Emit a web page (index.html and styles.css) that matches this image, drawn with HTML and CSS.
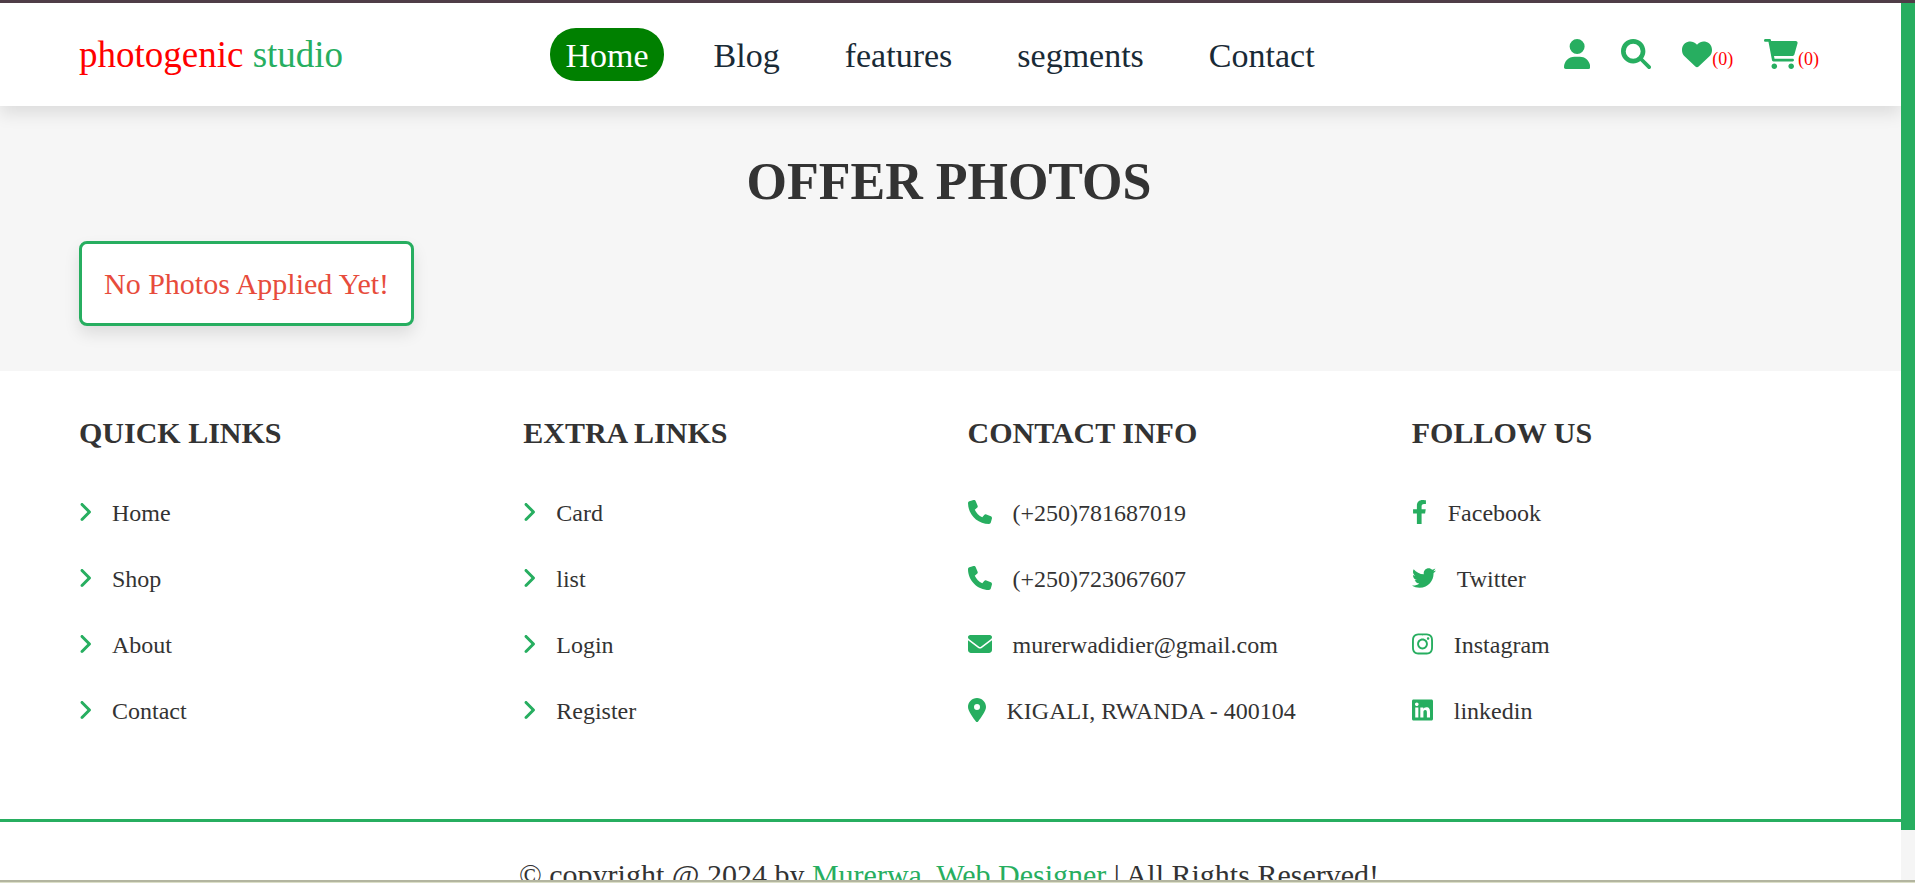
FILE: index.html
```html
<!DOCTYPE html>
<html lang="en">
<head>
<meta charset="utf-8">
<title>photogenic studio</title>
<link rel="stylesheet" href="styles.css">
</head>
<body>
<svg class="sprite" aria-hidden="true">
  <symbol id="angle" viewBox="0 0 256 512"><path d="M64 448c-8.188 0-16.38-3.125-22.62-9.375c-12.5-12.5-12.5-32.75 0-45.25L178.8 256L41.38 118.6c-12.5-12.5-12.5-32.75 0-45.25s32.75-12.5 45.25 0l160 160c12.5 12.5 12.5 32.75 0 45.25l-160 160C80.38 444.9 72.19 448 64 448z"/></symbol>
  <symbol id="phone" viewBox="0 0 512 512"><path d="M164.9 24.6c-7.7-18.6-28-28.5-47.4-23.2l-88 24C12.1 30.2 0 46 0 64C0 311.4 200.6 512 448 512c18 0 33.800-12.100 38.600-29.500l24-88c5.300-19.400-4.600-39.700-23.200-47.400l-96-40c-16.300-6.800-35.200-2.100-46.300 11.600L304.700 368C234.300 334.700 177.300 277.700 144 207.300L193.300 167c13.700-11.200 18.400-30 11.600-46.300l-40-96z"/></symbol>
</svg>
<div class="edge edge-top"></div>
<div class="viewport">
  <div class="page">
    <header class="header">
      <a class="logo" href="#">photogenic <span>studio</span></a>
      <nav class="navbar">
        <a class="active" href="#">Home</a>
        <a href="#">Blog</a>
        <a href="#">features</a>
        <a href="#">segments</a>
        <a href="#">Contact</a>
      </nav>
      <div class="icons">
        <a href="#" aria-label="Account"><svg viewBox="0 0 448 512"><path d="M224 256A128 128 0 1 0 224 0a128 128 0 1 0 0 256zm-45.700 48C79.800 304 0 383.800 0 482.300C0 498.700 13.300 512 29.700 512H418.300c16.400 0 29.700-13.300 29.700-29.700C448 383.800 368.200 304 269.700 304H178.300z"/></svg></a>
        <a href="#" aria-label="Search"><svg viewBox="0 0 512 512"><path d="M416 208c0 45.900-14.900 88.300-40 122.700L502.600 457.400c12.500 12.500 12.500 32.800 0 45.300s-32.800 12.500-45.300 0L330.700 376c-34.400 25.200-76.800 40-122.700 40C93.100 416 0 322.900 0 208S93.100 0 208 0S416 93.100 416 208zM208 336a128 128 0 1 0 0-256 128 128 0 1 0 0 256z"/></svg></a>
        <a href="#" aria-label="Wishlist"><svg viewBox="0 0 512 512"><path d="M47.600 300.400L228.300 469.100c7.500 7 17.400 10.900 27.700 10.900s20.200-3.900 27.700-10.900L464.400 300.400c30.400-28.300 47.600-68 47.600-109.500v-5.800c0-69.900-50.500-129.500-119.400-141C347 36.500 300.600 51.400 268 84L256 96 244 84c-32.600-32.600-79-47.500-124.600-39.900C50.500 55.600 0 115.200 0 185.100v5.800c0 41.500 17.200 81.200 47.600 109.500z"/></svg><span>(0)</span></a>
        <a href="#" aria-label="Cart"><svg viewBox="0 0 576 512"><path d="M96 0C107.500 0 117.400 8.190 119.600 19.510L121.100 32H541.800C562.100 32 578.300 52.250 572.600 72.660L518.600 264.700C514.700 278.500 502.100 288 487.800 288H170.700L179.900 336H488C501.300 336 512 346.700 512 360C512 373.300 501.300 384 488 384H159.100C148.500 384 138.600 375.800 136.400 364.500L76.140 48H24C10.750 48 0 37.250 0 24C0 10.750 10.750 0 24 0H96zM128 464C128 437.500 149.500 416 176 416C202.500 416 224 437.500 224 464C224 490.500 202.500 512 176 512C149.500 512 128 490.500 128 464zM512 464C512 490.500 490.500 512 464 512C437.500 512 416 490.500 416 464C416 437.500 437.500 416 464 416C490.500 416 512 437.500 512 464z"/></svg><span>(0)</span></a>
      </div>
    </header>
    <main class="offers">
      <h1>OFFER PHOTOS</h1>
      <p class="empty">No Photos Applied Yet!</p>
    </main>
    <footer class="footer">
      <div class="columns">
        <section>
          <h2>QUICK LINKS</h2>
          <a href="#"><svg viewBox="0 0 256 512"><use href="#angle"/></svg>Home</a>
          <a href="#"><svg viewBox="0 0 256 512"><use href="#angle"/></svg>Shop</a>
          <a href="#"><svg viewBox="0 0 256 512"><use href="#angle"/></svg>About</a>
          <a href="#"><svg viewBox="0 0 256 512"><use href="#angle"/></svg>Contact</a>
        </section>
        <section>
          <h2>EXTRA LINKS</h2>
          <a href="#"><svg viewBox="0 0 256 512"><use href="#angle"/></svg>Card</a>
          <a href="#"><svg viewBox="0 0 256 512"><use href="#angle"/></svg>list</a>
          <a href="#"><svg viewBox="0 0 256 512"><use href="#angle"/></svg>Login</a>
          <a href="#"><svg viewBox="0 0 256 512"><use href="#angle"/></svg>Register</a>
        </section>
        <section>
          <h2>CONTACT INFO</h2>
          <a href="#"><svg viewBox="0 0 512 512"><use href="#phone"/></svg>(+250)781687019</a>
          <a href="#"><svg viewBox="0 0 512 512"><use href="#phone"/></svg>(+250)723067607</a>
          <a href="#"><svg viewBox="0 0 512 512"><path d="M464 64C490.500 64 512 85.490 512 112C512 127.100 504.900 141.300 492.800 150.400L275.200 313.600C263.800 322.100 248.200 322.100 236.800 313.600L19.200 150.400C7.113 141.300 0 127.100 0 112C0 85.490 21.490 64 48 64H464zM217.600 339.200C240.400 356.300 271.600 356.300 294.400 339.200L512 176V384C512 419.300 483.300 448 448 448H64C28.650 448 0 419.300 0 384V176L217.600 339.200z"/></svg>murerwadidier@gmail.com</a>
          <a href="#"><svg viewBox="0 0 384 512"><path d="M215.700 499.200C267 435 384 279.400 384 192C384 86 298 0 192 0S0 86 0 192c0 87.400 117 243 168.300 307.200c12.300 15.300 35.100 15.300 47.400 0zM192 128a64 64 0 1 1 0 128 64 64 0 1 1 0-128z"/></svg>KIGALI, RWANDA - 400104</a>
        </section>
        <section>
          <h2>FOLLOW US</h2>
          <a href="#"><svg viewBox="0 0 320 512"><path d="M279.140 288l14.220-92.660h-88.910v-60.130c0-25.350 12.420-50.060 52.240-50.060h40.420V6.260S260.430 0 225.360 0c-73.220 0-121.080 44.380-121.080 124.720v70.620H22.890V288h81.390v224h100.170V288z"/></svg>Facebook</a>
          <a href="#"><svg viewBox="0 0 512 512"><path d="M459.370 151.716c.325 4.548.325 9.097.325 13.645 0 138.720-105.583 298.558-298.558 298.558-59.452 0-114.680-17.219-161.137-47.106 8.447.974 16.568 1.299 25.340 1.299 49.055 0 94.213-16.568 130.274-44.832-46.132-.975-84.792-31.188-98.112-72.772 6.498.974 12.995 1.624 19.818 1.624 9.421 0 18.843-1.300 27.614-3.573-48.081-9.747-84.143-51.980-84.143-102.985v-1.299c13.969 7.797 30.214 12.670 47.431 13.319-28.264-18.843-46.781-51.005-46.781-87.391 0-19.492 5.197-37.360 14.294-52.954 51.655 63.675 129.300 105.258 216.365 109.807-1.624-7.797-2.599-15.918-2.599-24.040 0-57.828 46.782-104.934 104.934-104.934 30.213 0 57.502 12.670 76.670 33.137 23.715-4.548 46.456-13.320 66.599-25.340-7.798 24.366-24.366 44.833-46.132 57.827 21.117-2.273 41.584-8.122 60.426-16.243-14.292 20.791-32.161 39.308-52.628 54.253z"/></svg>Twitter</a>
          <a href="#"><svg viewBox="0 0 448 512"><path d="M224.100 141c-63.600 0-114.900 51.300-114.900 114.900s51.300 114.900 114.900 114.900S339 319.500 339 255.900 287.700 141 224.100 141zm0 189.600c-41.100 0-74.700-33.500-74.700-74.700s33.500-74.700 74.700-74.700 74.700 33.500 74.700 74.700-33.600 74.700-74.700 74.700zm146.400-194.300c0 14.900-12 26.800-26.800 26.800-14.900 0-26.800-12-26.800-26.800s12-26.800 26.800-26.800 26.800 12 26.800 26.800zm76.100 27.200c-1.700-35.900-9.900-67.700-36.200-93.900-26.200-26.200-58-34.400-93.900-36.200-37-2.100-147.900-2.100-184.900 0-35.800 1.700-67.600 9.900-93.900 36.100s-34.400 58-36.200 93.900c-2.100 37-2.100 147.900 0 184.900 1.700 35.900 9.900 67.700 36.200 93.900s58 34.400 93.900 36.200c37 2.100 147.900 2.100 184.900 0 35.900-1.700 67.700-9.900 93.900-36.200 26.200-26.200 34.400-58 36.200-93.900 2.100-37 2.100-147.800 0-184.800zM398.800 388c-7.800 19.600-22.900 34.700-42.600 42.600-29.500 11.700-99.500 9-132.100 9s-102.700 2.600-132.100-9c-19.600-7.800-34.700-22.900-42.600-42.600-11.700-29.500-9-99.500-9-132.100s-2.600-102.700 9-132.100c7.800-19.600 22.900-34.700 42.600-42.600 29.500-11.700 99.500-9 132.100-9s102.700-2.600 132.100 9c19.600 7.800 34.700 22.900 42.600 42.600 11.700 29.500 9 99.500 9 132.100s2.700 102.700-9 132.100z"/></svg>Instagram</a>
          <a href="#"><svg viewBox="0 0 448 512"><path d="M416 32H31.900C14.300 32 0 46.500 0 64.300v383.400C0 465.500 14.300 480 31.900 480H416c17.600 0 32-14.500 32-32.300V64.300c0-17.800-14.400-32.300-32-32.300zM135.400 416H69V202.200h66.500V416zm-33.200-243c-21.300 0-38.500-17.300-38.500-38.500S80.900 96 102.200 96c21.200 0 38.500 17.300 38.500 38.500 0 21.300-17.200 38.500-38.500 38.500zm282.100 243h-66.400V312c0-24.800-.5-56.700-34.500-56.700-34.600 0-39.900 27-39.900 54.900V416h-66.400V202.200h63.700v29.200h.9c8.900-16.800 30.600-34.500 62.900-34.500 67.200 0 79.700 44.300 79.700 101.900V416z"/></svg>linkedin</a>
        </section>
      </div>
      <p class="credit">© copyright @ 2024 by <span>Murerwa, Web Designer</span> | All Rights Reserved!</p>
    </footer>
  </div>
  <div class="track" aria-hidden="true"><div class="thumb"></div></div>
</div>
<div class="edge edge-bottom"></div>
</body>
</html>
```

FILE: styles.css
```css
* { box-sizing: border-box; margin: 0; padding: 0; }

:root {
  --green: #27ae60;
  --ink: #333;
  --left: 79px;
  --right: 82px;
  --shadow: 0 8px 16px rgba(0, 0, 0, .1);
}

body {
  display: flex;
  flex-direction: column;
  height: 100vh;
  overflow: hidden;
  font-family: "Liberation Serif", "Times New Roman", serif;
  color: var(--ink);
  background: #fff;
}

a { color: inherit; text-decoration: none; }
svg { display: block; fill: var(--green); }
.sprite { position: absolute; width: 0; height: 0; }

.edge { flex: none; height: 3px; }
.edge-top { background: #4f3d47; }
.edge-bottom { background: #dcdfc8; border-top: 2px solid #b3b5a0; }

.viewport { flex: 1; min-height: 0; display: flex; }
.page { flex: 1; min-width: 0; overflow: hidden; }
.track { flex: none; width: 14px; background: #f5f5f5; }
.thumb { height: 94.3%; background: var(--green); }

.header {
  position: relative;
  display: flex;
  align-items: center;
  justify-content: space-between;
  padding: 25px var(--right) 25px var(--left);
  background: #fff;
  box-shadow: var(--shadow);
}
.logo { font-size: 37px; color: #f00; }
.logo span { color: var(--green); }

.navbar { display: flex; gap: 35px; }
.navbar a {
  padding: 8px 15px 6px;
  font-size: 34px;
  line-height: 39px;
  color: #192a36;
  border-radius: 26px;
}
.navbar .active { background: green; color: #fff; }

.icons { display: flex; gap: 31px; padding: 0 0 2px 27px; }
.icons a { display: flex; align-items: flex-end; }
.icons svg { height: 30px; }
.icons span { font-size: 18px; line-height: 20px; color: #f00; }

.offers { padding: 46px var(--right) 45px var(--left); background: #f6f6f6; }
.offers h1 { font-size: 52px; line-height: 60px; text-align: center; }
.empty {
  width: fit-content;
  margin-top: 29px;
  padding: 22px;
  font-size: 30px;
  line-height: 35px;
  color: #e74c3c;
  background: #fff;
  border: 3px solid var(--green);
  border-radius: 8px;
  box-shadow: var(--shadow);
}

.footer { padding-top: 34px; background: #fff; }
.columns {
  display: grid;
  grid-template-columns: repeat(4, 1fr);
  gap: 37px;
  padding: 0 var(--right) 75px var(--left);
}
.columns h2 { padding: 11px 0 30px; font-size: 30px; line-height: 34px; }
.columns a {
  display: flex;
  align-items: center;
  gap: 21px;
  padding: 19px 0;
  font-size: 24px;
  line-height: 28px;
}
.columns svg { height: 24px; margin-bottom: 2px; }

.credit {
  padding: 36px var(--right) 36px var(--left);
  border-top: 3px solid var(--green);
  font-size: 30px;
  line-height: 34px;
  text-align: center;
}
.credit span { color: var(--green); }
```
